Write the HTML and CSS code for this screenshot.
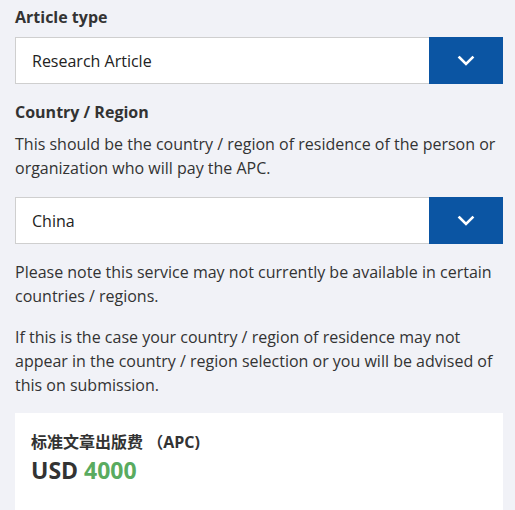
FILE: index.html
```html
<!DOCTYPE html>
<html lang="en">
<head>
<meta charset="utf-8">
<link rel="stylesheet" href="styles.css">
</head>
<body>
<main class="form">
  <label class="field-label">Article type</label>
  <div class="select">
    <span class="select-value">Research Article</span>
    <span class="select-btn">
      <svg width="18" height="12" viewBox="0 0 18 12"><path d="M2.5 2.5 L9 9 L15.5 2.5" fill="none" stroke="#fff" stroke-width="2.6" stroke-linecap="square"/></svg>
    </span>
  </div>

  <label class="field-label gap-top">Country / Region</label>
  <p class="hint">This should be the country / region of residence of the person or organization who will pay the APC.</p>
  <div class="select select-second">
    <span class="select-value">China</span>
    <span class="select-btn">
      <svg width="18" height="12" viewBox="0 0 18 12"><path d="M2.5 2.5 L9 9 L15.5 2.5" fill="none" stroke="#fff" stroke-width="2.6" stroke-linecap="square"/></svg>
    </span>
  </div>

  <p class="note">Please note this service may not currently be available in certain countries / regions.</p>
  <p class="note">If this is the case your country / region of residence may not appear in the country / region selection or you will be advised of this on submission.</p>

  <section class="card">
    <h3 class="card-title">标准文章出版费 （APC)</h3>
    <div class="price">USD <span class="amount">4000</span></div>
  </section>
</main>
</body>
</html>
```
FILE: styles.css
```css
html, body {
  margin: 0;
  padding: 0;
  background: #f1f2f7;
}
body {
  font-family: "Open Sans", "Noto Sans CJK SC", sans-serif;
  font-size: 16px;
  line-height: 24px;
  color: #333;
}
.form {
  padding: 5px 12px 0 15px;
  display: flex;
  flex-direction: column;
}
.field-label {
  display: block;
  font-weight: 700;
  font-size: 16px;
  line-height: 24px;
  color: #333;
}
.gap-top {
  margin-top: 16px;
}
.select {
  margin-top: 8px;
  height: 47px;
  box-sizing: border-box;
  border: 1px solid #cfcfcf;
  border-right: none;
  background: #fff;
  display: flex;
  align-items: stretch;
}
.select-second {
  margin-top: 17px;
}
.select-value {
  flex: 1;
  display: flex;
  align-items: center;
  padding-left: 16px;
  color: #222;
}
.select-btn {
  width: 74px;
  margin: -1px 0;
  background: #0b55a3;
  display: flex;
  align-items: center;
  justify-content: center;
}
.select-btn svg {
  display: block;
}
.hint {
  margin: 8px 0 0;
}
.note {
  margin: 16px 0 0;
}
.note + .note {
  margin-top: 17px;
}
.card {
  margin-top: 16px;
  background: #fff;
  padding: 17px 16px 30px;
}
.card-title {
  margin: 0;
  font-size: 16px;
  line-height: 24px;
  font-weight: 700;
  color: #333;
}
.price {
  font-size: 23px;
  line-height: 32px;
  font-weight: 700;
  color: #333;
}
.amount {
  color: #5aab5f;
}
```
